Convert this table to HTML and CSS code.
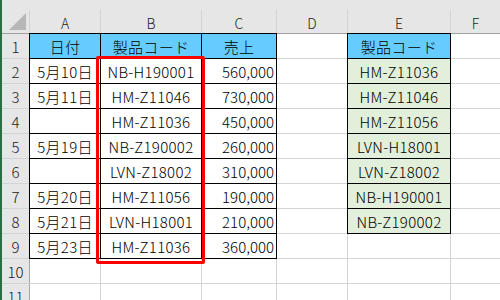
FILE: index.html
```html
<!DOCTYPE html>
<html lang="ja">
  <head>
    <meta charset="UTF-8" />
    <meta name="viewport" content="width=device-width, initial-scale=1.0" />
    <title>製品コード一覧</title>
    <link rel="stylesheet" href="styles.css">
  </head>
  <body>
    <div class="sheet">
      <div class="grid">
        <!-- column headers -->
        <div class="corner">
          <svg width="27" height="23" viewBox="0 0 27 23">
            <polygon points="7,20 24,3 24,20" fill="#b7b7b7" />
          </svg>
        </div>
        <div class="col-head">A</div>
        <div class="col-head">B</div>
        <div class="col-head">C</div>
        <div class="col-head">D</div>
        <div class="col-head">E</div>
        <div class="col-head">F</div>

        <div class="row-head">1</div>
        <div class="cell boxed title">日付</div>
        <div class="cell boxed title">製品コード</div>
        <div class="cell boxed title">売上</div>
        <div class="cell"></div>
        <div class="cell boxed title">製品コード</div>
        <div class="cell"></div>

        <div class="row-head">2</div>
        <div class="cell boxed">5月10日</div>
        <div class="cell boxed">NB-H190001</div>
        <div class="cell boxed num">560,000</div>
        <div class="cell"></div>
        <div class="cell boxed pick">HM-Z11036</div>
        <div class="cell"></div>

        <div class="row-head">3</div>
        <div class="cell boxed">5月11日</div>
        <div class="cell boxed">HM-Z11046</div>
        <div class="cell boxed num">730,000</div>
        <div class="cell"></div>
        <div class="cell boxed pick">HM-Z11046</div>
        <div class="cell"></div>

        <div class="row-head">4</div>
        <div class="cell boxed"></div>
        <div class="cell boxed">HM-Z11036</div>
        <div class="cell boxed num">450,000</div>
        <div class="cell"></div>
        <div class="cell boxed pick">HM-Z11056</div>
        <div class="cell"></div>

        <div class="row-head">5</div>
        <div class="cell boxed">5月19日</div>
        <div class="cell boxed">NB-Z190002</div>
        <div class="cell boxed num">260,000</div>
        <div class="cell"></div>
        <div class="cell boxed pick">LVN-H18001</div>
        <div class="cell"></div>

        <div class="row-head">6</div>
        <div class="cell boxed"></div>
        <div class="cell boxed">LVN-Z18002</div>
        <div class="cell boxed num">310,000</div>
        <div class="cell"></div>
        <div class="cell boxed pick">LVN-Z18002</div>
        <div class="cell"></div>

        <div class="row-head">7</div>
        <div class="cell boxed">5月20日</div>
        <div class="cell boxed">HM-Z11056</div>
        <div class="cell boxed num">190,000</div>
        <div class="cell"></div>
        <div class="cell boxed pick">NB-H190001</div>
        <div class="cell"></div>

        <div class="row-head">8</div>
        <div class="cell boxed">5月21日</div>
        <div class="cell boxed">LVN-H18001</div>
        <div class="cell boxed num">210,000</div>
        <div class="cell"></div>
        <div class="cell boxed pick">NB-Z190002</div>
        <div class="cell"></div>

        <div class="row-head">9</div>
        <div class="cell boxed">5月23日</div>
        <div class="cell boxed">HM-Z11036</div>
        <div class="cell boxed num">360,000</div>
        <div class="cell"></div>
        <div class="cell"></div>
        <div class="cell"></div>

        <div class="row-head">10</div>
        <div class="cell"></div>
        <div class="cell"></div>
        <div class="cell"></div>
        <div class="cell"></div>
        <div class="cell"></div>
        <div class="cell"></div>

        <div class="row-head">11</div>
        <div class="cell"></div>
        <div class="cell"></div>
        <div class="cell"></div>
        <div class="cell"></div>
        <div class="cell"></div>
        <div class="cell"></div>

        <!-- red frame around the code column -->
        <div class="highlight"></div>
      </div>
    </div>
  </body>
</html>
```

FILE: styles.css
```css
body {
  margin: 0;
  overflow: hidden;
  background: #fff;
  font-family: "Noto Sans CJK JP", "Liberation Sans", sans-serif;
  font-weight: 300;
}

.sheet {
  height: 300px;
  padding-top: 10px;
  box-sizing: border-box;
  background: #e6e6e6;
  border-left: 2px solid #217346;
  overflow: hidden;
}

.grid {
  position: relative;
  display: grid;
  grid-template-columns: 27px 70px 100px 74px 70px 102px 1fr;
  grid-template-rows: 23px repeat(11, 24px);
  gap: 1px;
  background: #d4d4d4;
}

/* header strip */
.corner,
.col-head,
.row-head {
  background: #e6e6e6;
  color: #222;
  font-size: 14px;
  display: flex;
  align-items: center;
  justify-content: center;
}
.corner svg {
  display: block;
}
.corner,
.col-head {
  box-shadow: 0 1px 0 #a0a0a0;
}
.col-head {
  padding-top: 2px;
  box-sizing: border-box;
}
.row-head {
  box-shadow: 1px 0 0 #a8a8a8;
  font-size: 15px;
}

/* cells */
.cell {
  background: #fff;
  color: #000;
  font-size: 15px;
  letter-spacing: 0.3px;
  display: flex;
  align-items: center;
  justify-content: center;
  white-space: nowrap;
  padding-top: 1px;
  box-sizing: border-box;
}
.cell.boxed {
  box-shadow: 0 0 0 1px #000;
}
.cell.num {
  justify-content: flex-end;
  padding-right: 2px;
  letter-spacing: 0;
}
.cell.title {
  background: #66ccff;
}
.cell.pick {
  background: #e2efda;
}

/* overlay: sits on the B2:B9 area without taking a grid slot */
.highlight {
  position: absolute;
  grid-column: 3 / 4;
  grid-row: 3 / 11;
  top: -3px;
  right: -4px;
  bottom: -6px;
  left: -5px;
  border: 3px solid #ff0000;
  border-radius: 2px;
  pointer-events: none;
  z-index: 2;
}
```
